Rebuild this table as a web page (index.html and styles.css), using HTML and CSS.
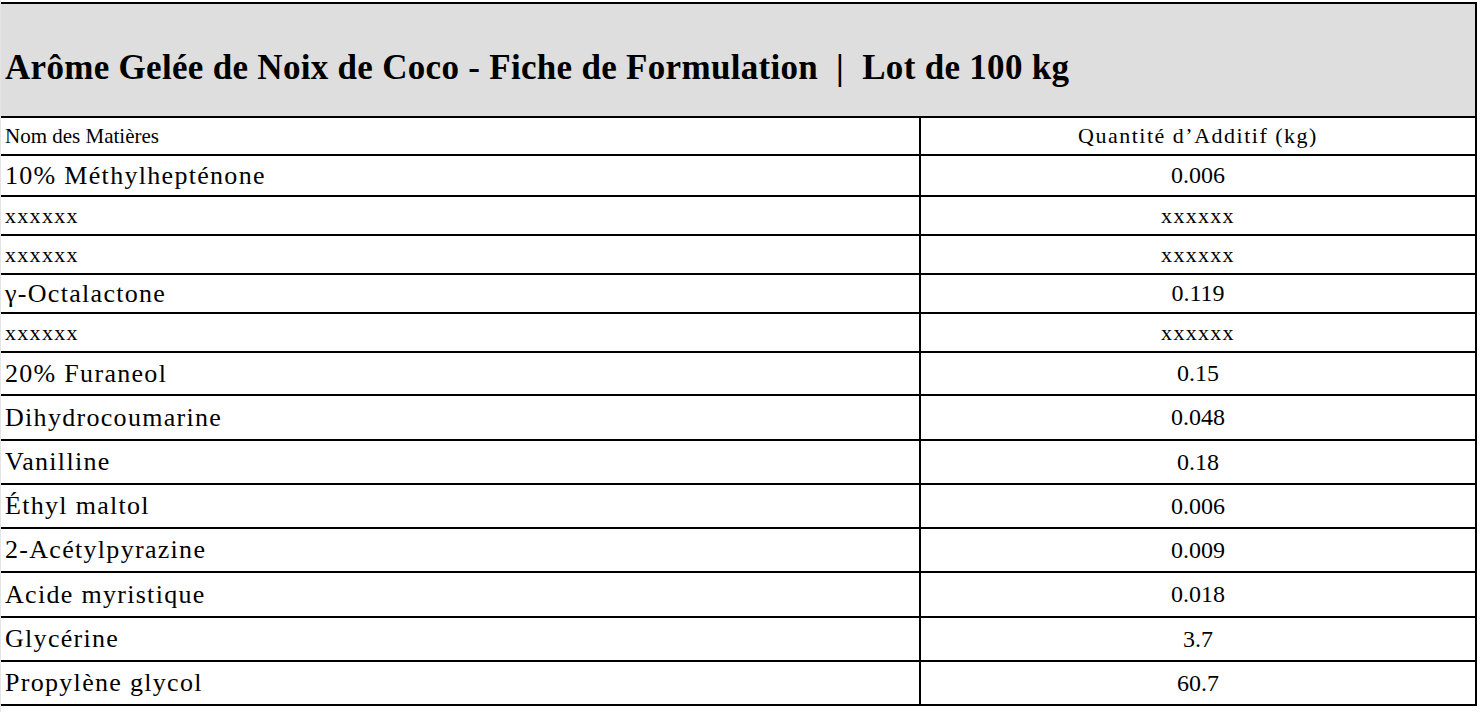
FILE: index.html
```html
<!DOCTYPE html>
<html lang="fr">
<head>
<meta charset="utf-8">
<title>Fiche de Formulation</title>
<link rel="stylesheet" href="styles.css">
</head>
<body>
<div class="sheet">
<table class="grid">
  <colgroup><col class="c-name"><col class="c-qty"></colgroup>
  <tr class="r-title"><td colspan="2" class="title">Arôme Gelée de Noix de Coco - Fiche de Formulation&nbsp; |&nbsp; Lot de 100 kg</td></tr>
  <tr class="r-head"><td class="name small">Nom des Matières</td><td class="qty head">Quantité d’Additif (kg)</td></tr>
  <tr class="r-a"><td class="name big">10% Méthylhepténone</td><td class="qty">0.006</td></tr>
  <tr class="r-x"><td class="name xx">xxxxxx</td><td class="qty xx">xxxxxx</td></tr>
  <tr class="r-x"><td class="name xx">xxxxxx</td><td class="qty xx">xxxxxx</td></tr>
  <tr class="r-g"><td class="name big">γ-Octalactone</td><td class="qty">0.119</td></tr>
  <tr class="r-x"><td class="name xx">xxxxxx</td><td class="qty xx">xxxxxx</td></tr>
  <tr class="r-b"><td class="name big">20% Furaneol</td><td class="qty">0.15</td></tr>
  <tr class="r-d"><td class="name big">Dihydrocoumarine</td><td class="qty">0.048</td></tr>
  <tr class="r-c"><td class="name big">Vanilline</td><td class="qty">0.18</td></tr>
  <tr class="r-c"><td class="name big">Éthyl maltol</td><td class="qty">0.006</td></tr>
  <tr class="r-c"><td class="name big">2-Acétylpyrazine</td><td class="qty">0.009</td></tr>
  <tr class="r-d"><td class="name big">Acide myristique</td><td class="qty">0.018</td></tr>
  <tr class="r-c"><td class="name big">Glycérine</td><td class="qty">3.7</td></tr>
  <tr class="r-c"><td class="name big">Propylène glycol</td><td class="qty">60.7</td></tr>
</table>
</div>
</body>
</html>
```
FILE: styles.css
```css
html, body {
  margin: 0;
  padding: 0;
  background: #ffffff;
}
body {
  font-family: "Liberation Serif", "Times New Roman", serif;
  color: #000;
}
.sheet {
  padding-top: 2px;
  overflow: hidden;
  width: 1484px;
  height: 712px;
  border-left: 1px solid #e4e4e4;
  box-sizing: border-box;
}
.grid {
  border-collapse: collapse;
  margin-left: -12px;
  table-layout: fixed;
  width: 1486px;
}
.c-name { width: 930px; }
.c-qty { width: 556px; }
.grid td {
  border: 2px solid #000;
  padding: 0;
  white-space: nowrap;
  overflow: hidden;
}
.title {
  background: #dedede;
  height: 114px;
  vertical-align: top;
  font-weight: bold;
  font-size: 35px;
  line-height: 40px;
  letter-spacing: 0.3px;
  padding: 44px 0 0 14px !important;
  box-sizing: border-box;
}
.name { padding-left: 14px !important; text-align: left; }
.qty { text-align: center; font-size: 24px; }
.small { font-size: 21px; }
.head { font-size: 22px; letter-spacing: 1.5px; }
.big { font-size: 26px; letter-spacing: 1.3px; }
.xx { font-size: 22px; letter-spacing: 1.3px; }
.r-head td { height: 36px; }
.r-a td { height: 39px; }
.r-x td { height: 37px; }
.r-g td { height: 37px; }
.r-b td { height: 41px; }
.r-c td { height: 42px; }
.r-d td { height: 43px; }
```
